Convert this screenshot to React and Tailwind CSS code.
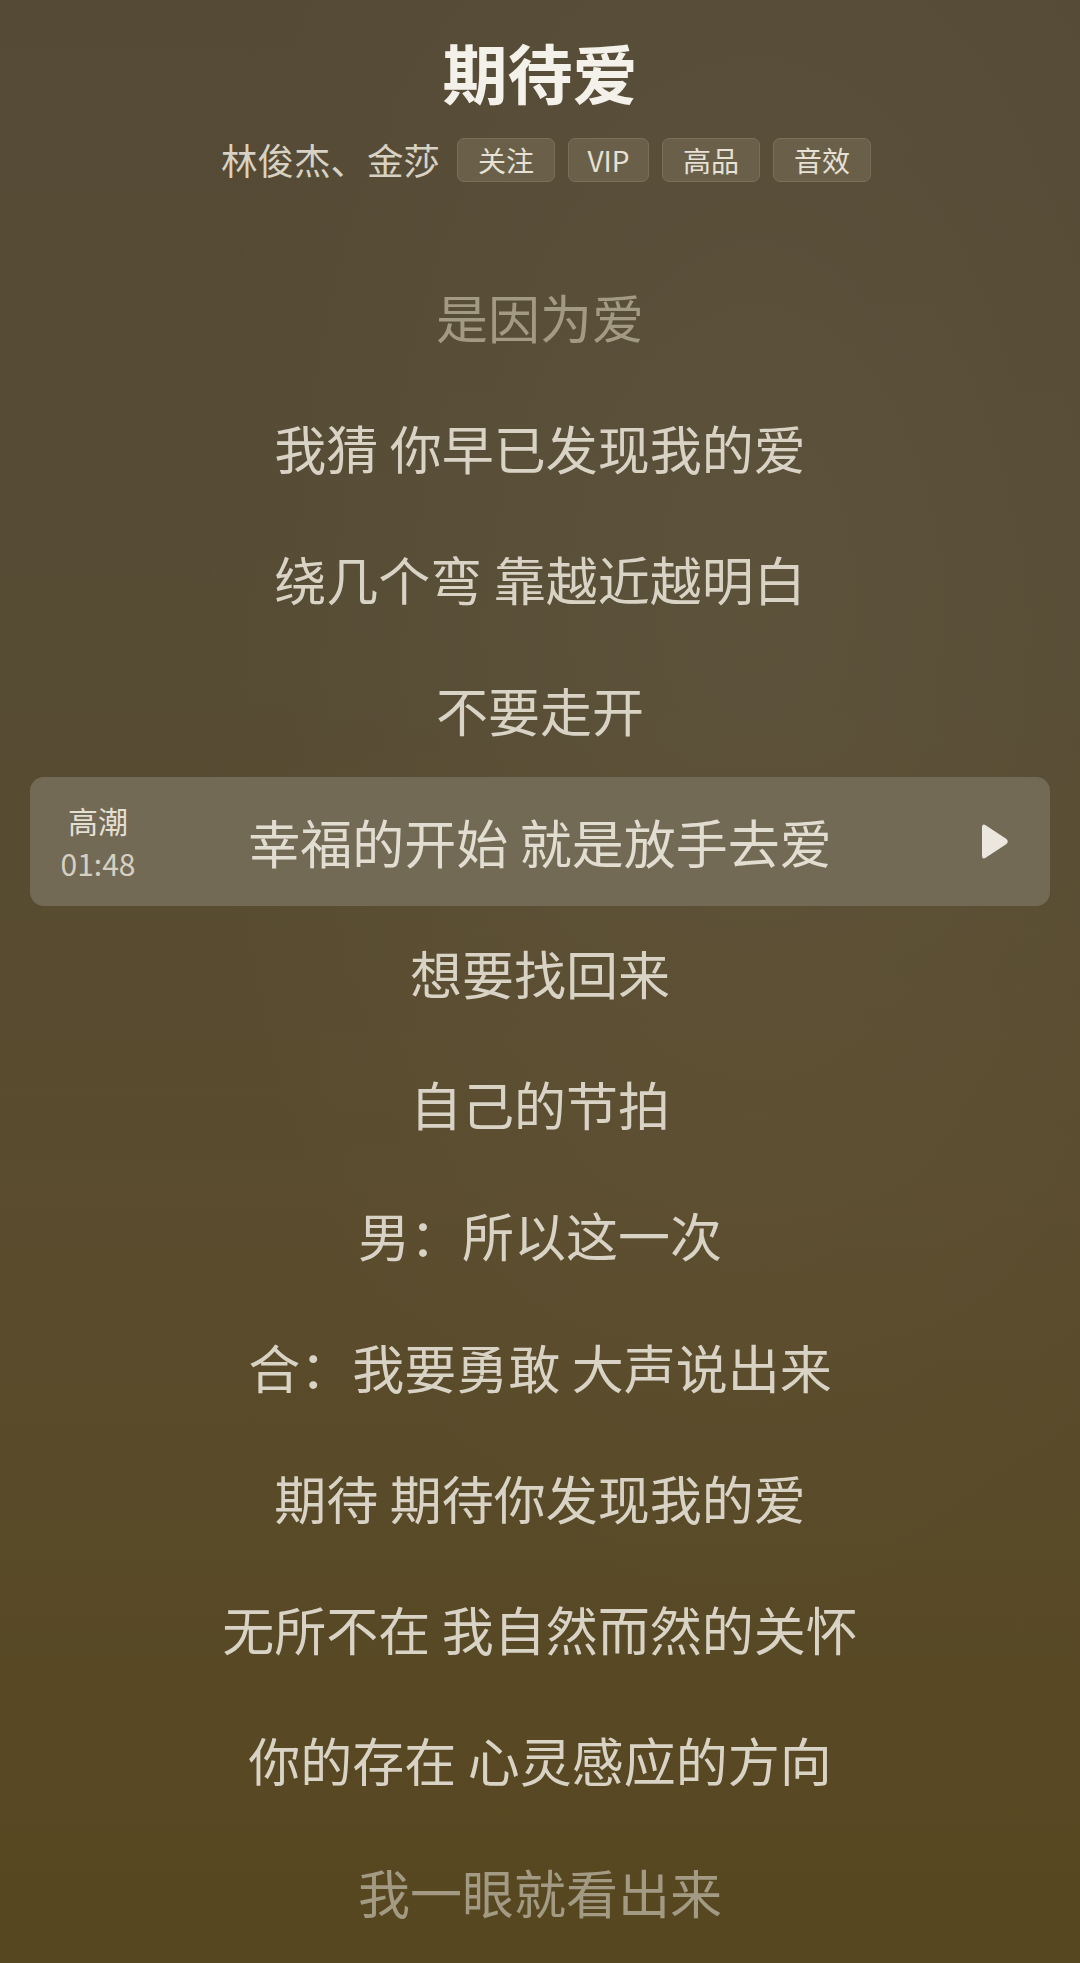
import React from "react";

const lines = [
  { t: "是因为爱", dim: true },
  { t: "我猜 你早已发现我的爱" },
  { t: "绕几个弯 靠越近越明白" },
  { t: "不要走开" },
  { t: "幸福的开始 就是放手去爱", hl: true },
  { t: "想要找回来" },
  { t: "自己的节拍" },
  { t: "男：所以这一次" },
  { t: "合：我要勇敢 大声说出来" },
  { t: "期待 期待你发现我的爱" },
  { t: "无所不在 我自然而然的关怀" },
  { t: "你的存在 心灵感应的方向" },
  { t: "我一眼就看出来", dim: true },
];

const font = { fontFamily: '"Noto Sans CJK SC", "Noto Sans", sans-serif' };

function Badge({ children, w }) {
  return (
    <div
      className={`h-[44px] ${w} flex items-center justify-center rounded-[7px] border border-[#7a705a] bg-[#6a604a] text-[28px] leading-none text-[#e6e1d4]`}
    >
      {children}
    </div>
  );
}

export default function App() {
  return (
    <div
      className="w-[1080px] h-[1963px] overflow-hidden bg-[linear-gradient(180deg,#554a35_0%,#564b33_35%,#5a4c2e_60%,#574720_100%)] relative"
      style={font}
    >
      <div className="absolute inset-0 bg-[radial-gradient(ellipse_at_70%_30%,rgba(255,255,240,0.04),transparent_55%)] pointer-events-none" />
      <div className="relative flex flex-col items-center">
        <div className="pt-[33px] text-[65px] leading-[76px] font-bold text-[#f4f1ea]">
          期待爱
        </div>
        <div className="mt-[29px] flex items-center pl-[12px]">
          <span className="text-[36.5px] leading-[44px] text-[#d8d2c4] mr-[17px]">
            林俊杰、金莎
          </span>
          <div className="flex items-center gap-[13px]">
            <Badge w="w-[98px]">关注</Badge>
            <Badge w="w-[81px]">VIP</Badge>
            <Badge w="w-[98px]">高品</Badge>
            <Badge w="w-[98px]">音效</Badge>
          </div>
        </div>
        <div className="mt-[69px] w-full flex flex-col">
          {lines.map((l, i) =>
            l.hl ? (
              <div key={i} className="h-[131.25px] flex items-center px-[30px]">
                <div className="w-full h-[129px] rounded-[14px] bg-[#736a56] flex items-center">
                  <div className="w-[136px] flex flex-col items-center">
                    <span className="text-[30px] leading-[43px] text-[#e4dfd3]">高潮</span>
                    <span className="text-[30px] leading-[43px] text-[#d6d0c3]">01:48</span>
                  </div>
                  <div className="flex-1 text-center text-[52px] leading-none text-[#e2ddd1]">
                    {l.t}
                  </div>
                  <div className="w-[136px] flex justify-end pr-[41px]">
                    <svg width="28" height="37" viewBox="0 0 28 37">
                      <path
                        d="M5 2.5 L25.5 16 Q28 18.5 25.5 21 L5 34.5 Q1 37 1 32.5 V4.5 Q1 0 5 2.5Z"
                        fill="#ebe7de"
                      />
                    </svg>
                  </div>
                </div>
              </div>
            ) : (
              <div
                key={i}
                className={`h-[131.25px] flex items-center justify-center text-[52px] leading-none ${
                  l.dim ? "text-[#a39a84]" : "text-[#d9d3c6]"
                }`}
              >
                {l.t}
              </div>
            )
          )}
        </div>
      </div>
    </div>
  );
}
